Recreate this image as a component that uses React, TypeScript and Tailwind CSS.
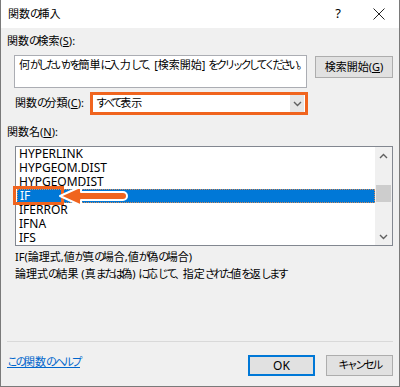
import React from "react";

const JP = { fontFamily: '"Noto Sans", "Noto Sans CJK JP", sans-serif' };

const ROWS = ["HYPERLINK", "HYPGEOM.DIST", "HYPGEOMDIST", "IF", "IFERROR", "IFNA", "IFS"];

function T({ s, tight }: { s: string; tight?: boolean }) {
  const parts = s.split(/([\u3040-\u30ff、。]+)/);
  return (
    <>
      {parts.map((p, i) =>
        i % 2 ? (
          <span key={i} className={tight ? "tracking-[-2.9px]" : "tracking-[-2.5px]"}>
            {p}
          </span>
        ) : (
          p
        )
      )}
    </>
  );
}

function Chevron({ up }: { up?: boolean }) {
  return (
    <svg width="9" height="6" viewBox="0 0 9 6">
      <path
        d={up ? "M1 5 L4.5 1.5 L8 5" : "M1 1 L4.5 4.5 L8 1"}
        fill="none"
        stroke="#606060"
        strokeWidth="1.4"
      />
    </svg>
  );
}

function PointerArrow() {
  // overlay: orange box round the IF row and an arrow pointing at it
  return (
    <svg
      className="absolute left-[-3px] top-[39px] overflow-visible pointer-events-none"
      width="130"
      height="24"
      viewBox="0 0 130 24"
    >
      <rect x="1.5" y="1.5" width="48" height="16" fill="none" stroke="#f0641e" strokeWidth="3" />
      <path
        d="M47 10 L68 0.5 L68 6 L110 6 A4 4 0 0 1 110 14 L68 14 L68 19.5 Z"
        fill="#f0641e"
        stroke="#ffffff"
        strokeWidth="2"
        strokeLinejoin="round"
      />
    </svg>
  );
}

export default function App() {
  return (
    <div
      className="w-[400px] h-[387px] flex flex-col border-x border-b border-[#7a7a7a] text-[11px] text-black bg-[#f0f0f0] whitespace-nowrap"
      style={JP}
    >
      <div className="h-[28px] bg-white flex items-center pl-[7px] shrink-0">
        <span>
          <T s="関数の挿入" />
        </span>
        <span className="ml-auto text-[13px] w-[12px] text-center mr-[29px]">?</span>
        <svg width="12" height="12" viewBox="0 0 12 12" className="mr-[14px]">
          <path d="M0.5 0.5 L11.5 11.5 M11.5 0.5 L0.5 11.5" stroke="#222" strokeWidth="1" />
        </svg>
      </div>

      <div className="flex-1 flex flex-col px-[6px]">
        <div className="h-[27px] flex items-center">
          <T s="関数の検索" />(<span className="underline">S</span>):
        </div>
        <div className="flex items-start">
          <div className="ml-[7px] w-[293px] h-[33px] bg-white border border-[#abadb3] pl-[4px] pt-[1px] leading-[16px] overflow-hidden">
            <T tight s="何がしたいかを簡単に入力して、[検索開始] をクリックしてください。" />
          </div>
          <button className="ml-[8px] mt-[1px] w-[78px] h-[22px] bg-[#e1e1e1] border border-[#adadad] flex items-center justify-center">
            検索開始(<span className="underline">G</span>)
          </button>
        </div>

        <div className="mt-[4px] h-[23px] flex items-center">
          <div className="pl-[8px] w-[83px]">
            <T s="関数の分類" />(<span className="underline">C</span>):
          </div>
          <div className="w-[218px] h-[23px] border-[3px] border-[#f0641e] bg-white flex items-center">
            <span className="pl-[3px]">
              <T s="すべて表示" />
            </span>
            <div className="ml-auto h-full w-[14px] mr-[1px] bg-[#e5e5e5] flex items-center justify-center">
              <Chevron />
            </div>
          </div>
        </div>

        <div className="h-[31px] flex items-center pt-[3px]">
          関数名(<span className="underline">N</span>):
        </div>
        <div className="relative ml-[8px] w-[378px] h-[100px] bg-white border border-[#828790] flex text-[12px]">
          <div className="flex-1 flex flex-col">
            {ROWS.map((r) =>
              r === "IF" ? (
                <div
                  key={r}
                  className="h-[14px] leading-[12px] pl-[2px] bg-[#0078d7] text-white border border-dotted border-[#d08a5a] ml-[1px]"
                >
                  {r}
                </div>
              ) : (
                <div key={r} className="h-[14px] leading-[14px] pl-[3px]">
                  {r}
                </div>
              )
            )}
          </div>
          <div className="w-[17px] bg-[#f0f0f0] flex flex-col items-center">
            <div className="h-[17px] flex items-center justify-center">
              <Chevron up />
            </div>
            <div className="mt-[21px] w-[15px] h-[17px] bg-[#cdcdcd]" />
            <div className="mt-auto h-[17px] flex items-center justify-center">
              <Chevron />
            </div>
          </div>
          <PointerArrow />
        </div>

        <div className="mt-[2px] pl-[8px] leading-[17px]">
          <div>
            IF(<T s="論理式,値が真の場合,値が偽の場合" />)
          </div>
          <div>
            <T s="論理式の結果 (真または偽) に応じて、指定された値を返します" />
          </div>
        </div>

        <div className="flex-1" />
        <div className="h-px bg-[#d9d9d9]" />
        <div className="h-[44px] flex items-start pt-[13px]">
          <a className="text-[#0066cc] underline leading-[14px]" href="#">
            <T s="この関数のヘルプ" />
          </a>
          <button className="ml-auto w-[67px] h-[21px] bg-[#e1e1e1] border-2 border-[#0078d7] flex items-center justify-center text-[12px]">
            OK
          </button>
          <button className="ml-[11px] w-[67px] h-[21px] bg-[#e1e1e1] border border-[#adadad] flex items-center justify-center">
            <T s="キャンセル" />
          </button>
        </div>
      </div>
    </div>
  );
}
